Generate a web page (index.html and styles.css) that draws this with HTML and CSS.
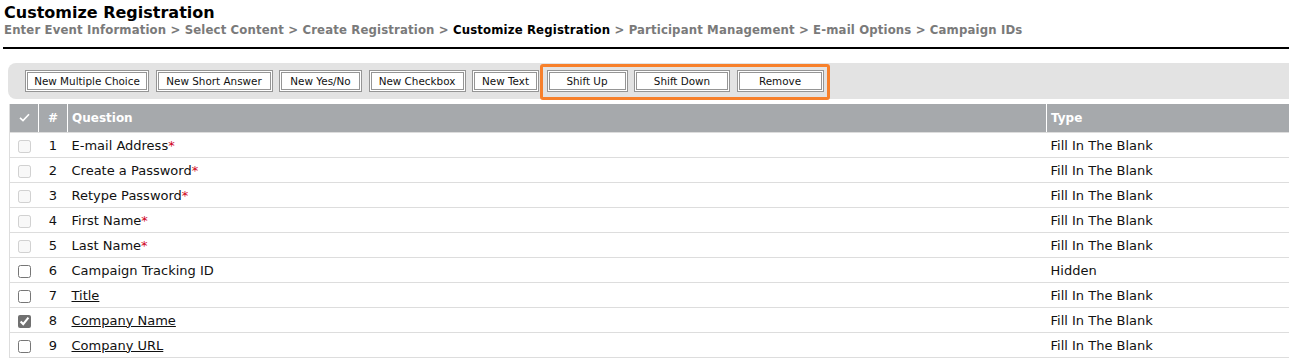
FILE: index.html
```html
<!DOCTYPE html>
<html lang="en">
<head>
  <meta charset="UTF-8">
  <title>Customize Registration</title>
  <link rel="stylesheet" href="styles.css">
</head>
<body>
  <div class="encabezado">
    <h1>Customize Registration</h1>
    <div class="migas">
      Enter Event Information &gt; Select Content &gt; Create Registration &gt;
      <span class="actual">Customize Registration</span> &gt;
      Participant Management &gt; E-mail Options &gt; Campaign IDs
    </div>
  </div>

  <div class="barra">
    <button class="boton multiple">New Multiple Choice</button>
    <button class="boton corta">New Short Answer</button>
    <button class="boton sino">New Yes/No</button>
    <button class="boton casilla">New Checkbox</button>
    <button class="boton texto">New Text</button>
    <div class="resaltado">
      <button class="boton subir">Shift Up</button>
      <button class="boton bajar">Shift Down</button>
      <button class="boton quitar">Remove</button>
    </div>
  </div>

  <table class="preguntas">
    <thead>
      <tr>
        <th class="col-check">
          <svg width="11" height="9" viewBox="0 0 11 9"><path d="M1 4.8 L4 7.6 L10 1.2" fill="none" stroke="#fff" stroke-width="1.6"/></svg>
        </th>
        <th class="col-num">#</th>
        <th class="col-preg">Question</th>
        <th class="col-tipo">Type</th>
      </tr>
    </thead>
    <tbody>
      <tr><td class="col-check"><input type="checkbox" disabled></td><td class="col-num">1</td><td>E-mail Address<span class="req">*</span></td><td>Fill In The Blank</td></tr>
      <tr><td class="col-check"><input type="checkbox" disabled></td><td class="col-num">2</td><td>Create a Password<span class="req">*</span></td><td>Fill In The Blank</td></tr>
      <tr><td class="col-check"><input type="checkbox" disabled></td><td class="col-num">3</td><td>Retype Password<span class="req">*</span></td><td>Fill In The Blank</td></tr>
      <tr><td class="col-check"><input type="checkbox" disabled></td><td class="col-num">4</td><td>First Name<span class="req">*</span></td><td>Fill In The Blank</td></tr>
      <tr><td class="col-check"><input type="checkbox" disabled></td><td class="col-num">5</td><td>Last Name<span class="req">*</span></td><td>Fill In The Blank</td></tr>
      <tr><td class="col-check"><input type="checkbox"></td><td class="col-num">6</td><td>Campaign Tracking ID</td><td>Hidden</td></tr>
      <tr><td class="col-check"><input type="checkbox"></td><td class="col-num">7</td><td><a href="#">Title</a></td><td>Fill In The Blank</td></tr>
      <tr><td class="col-check"><input type="checkbox" checked></td><td class="col-num">8</td><td><a href="#">Company Name</a></td><td>Fill In The Blank</td></tr>
      <tr><td class="col-check"><input type="checkbox"></td><td class="col-num">9</td><td><a href="#">Company URL</a></td><td>Fill In The Blank</td></tr>
    </tbody>
  </table>
</body>
</html>
```

FILE: styles.css
```css
body {
  margin: 0;
  font-family: "DejaVu Sans", Verdana, sans-serif;
  color: #111;
  background: #fff;
  width: 1340px;
  overflow: hidden;
}

/* Encabezado */
.encabezado {
  margin-left: 3px;
  padding: 4px 0 10px 1px;
  border-bottom: 2px solid #000;
}

h1 {
  margin: 0;
  font-size: 16px;
  line-height: 18px;
  font-weight: bold;
  color: #000;
}

.migas {
  font-family: "DejaVu Sans Condensed", "Liberation Sans", sans-serif;
  font-stretch: condensed;
  font-size: 13px;
  letter-spacing: 0.15px;
  font-weight: bold;
  line-height: 15px;
  color: #7a7a7a;
}

.migas .actual {
  color: #000;
}

/* Barra de botones */
.barra {
  display: flex;
  align-items: flex-start;
  gap: 6.5px;
  height: 36px;
  box-sizing: border-box;
  margin: 14px 0 0 8px;
  padding: 7px 0 0 17px;
  background: #e3e3e3;
  border-radius: 8px 0 0 8px;
}

.boton {
  height: 22px;
  padding: 0;
  background: #fff;
  border: 3px double #959595;
  font-family: "DejaVu Sans", Verdana, sans-serif;
  font-size: 10.4px;
  color: #111;
  cursor: pointer;
}

.multiple { width: 124px; }
.corta { width: 117px; }
.sino { width: 83px; }
.casilla { width: 97px; }
.texto { width: 67px; }

.resaltado {
  display: flex;
  gap: 6.5px;
  margin: -6px 0 0 -6px;
  padding: 3px 3px 5px 4px;
  border: 3px solid #f7802b;
  border-radius: 3px;
}

.subir { width: 81px; }
.bajar { width: 96px; }
.quitar { width: 87px; }

/* Tabla */
.preguntas {
  margin: 5px 0 0 9px;
  width: 1330px;
  border-collapse: collapse;
  border-left: 1px solid #ddd;
}

.preguntas th {
  height: 28px;
  padding: 0 4px;
  background: #a6a9ac;
  color: #fff;
  font-size: 12px;
  font-weight: bold;
  text-align: left;
  border-right: 1px solid #fff;
  border-bottom: 1px solid #ddd;
}

.preguntas td {
  height: 24px;
  padding: 0 4px;
  font-size: 13px;
  color: #111;
  border-bottom: 1px solid #ddd;
}

.preguntas .col-check {
  width: 20px;
  text-align: center;
}

.preguntas .col-num {
  width: 20px;
  text-align: center;
}

.preguntas .col-tipo {
  width: 283px;
}

input[type="checkbox"] {
  margin: 0;
  width: 13px;
  height: 13px;
  vertical-align: middle;
  accent-color: #707070;
}

.req {
  color: #d0021b;
}

.preguntas a {
  color: #111;
  text-decoration: underline;
}
```
